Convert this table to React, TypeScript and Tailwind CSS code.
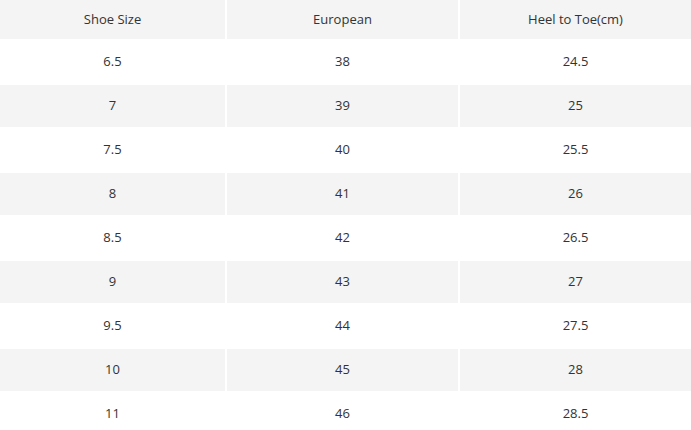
const rows = [
  ["6.5", "38", "24.5"],
  ["7", "39", "25"],
  ["7.5", "40", "25.5"],
  ["8", "41", "26"],
  ["8.5", "42", "26.5"],
  ["9", "43", "27"],
  ["9.5", "44", "27.5"],
  ["10", "45", "28"],
  ["11", "46", "28.5"],
];

const headers = ["Shoe Size", "European", "Heel to Toe(cm)"];

export default function App() {
  return (
    <div className="w-[691px] h-[430px] overflow-hidden bg-white text-[#333] text-[13px] font-['Open_Sans',sans-serif]">
      <div className="grid grid-cols-[225px_231px_231px] gap-[2px]">
        {headers.map((h) => (
          <div key={h} className="h-[39px] flex items-center justify-center bg-[#f4f4f4]">
            {h}
          </div>
        ))}
        {rows.map((r, i) =>
          r.map((c, j) => (
            <div
              key={`${i}-${j}`}
              className={`h-[42px] flex items-center justify-center ${i % 2 === 1 ? "bg-[#f4f4f4]" : "bg-white"}`}
            >
              {c}
            </div>
          ))
        )}
      </div>
    </div>
  );
}
